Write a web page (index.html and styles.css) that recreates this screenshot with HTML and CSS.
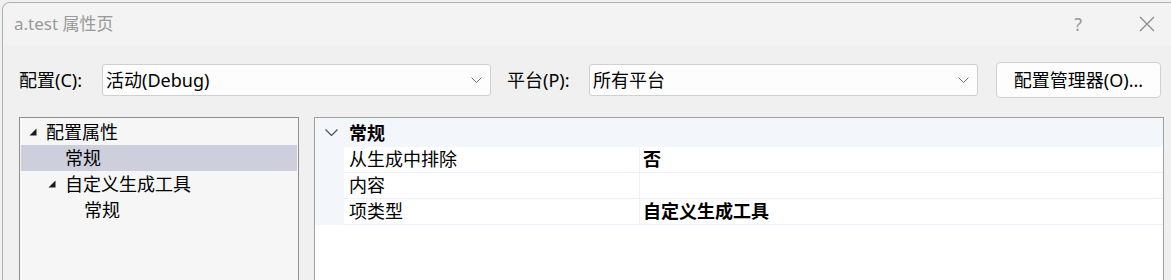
FILE: index.html
```html
<!DOCTYPE html>
<html lang="zh-CN">
<head>
  <meta charset="UTF-8">
  <meta name="viewport" content="width=device-width, initial-scale=1">
  <title>a.test 属性页</title>
  <link rel="stylesheet" href="styles.css">
</head>
<body>
  <div class="window">
    <!-- Barra de título -->
    <div class="titlebar">
      <span class="title">a.test 属性页</span>
      <span class="help">?</span>
      <span class="close">
        <svg width="16" height="16" viewBox="0 0 16 16"><path d="M1 1 L15 15 M15 1 L1 15" stroke="#8a8a8a" stroke-width="1.3" fill="none"/></svg>
      </span>
    </div>

    <div class="content">
      <!-- Configuração / plataforma -->
      <div class="config-row">
        <label class="field-label">配置(C):</label>
        <div class="combo">
          <span>活动(Debug)</span>
          <svg class="chevron" width="11" height="6" viewBox="0 0 11 6"><path d="M0.5 0.5 L5.5 5.5 L10.5 0.5" stroke="#707070" stroke-width="1" fill="none"/></svg>
        </div>
        <label class="field-label platform">平台(P):</label>
        <div class="combo">
          <span>所有平台</span>
          <svg class="chevron" width="11" height="6" viewBox="0 0 11 6"><path d="M0.5 0.5 L5.5 5.5 L10.5 0.5" stroke="#707070" stroke-width="1" fill="none"/></svg>
        </div>
        <button class="btn-manager">配置管理器(O)...</button>
      </div>

      <div class="panels">
        <!-- Árvore -->
        <div class="tree">
          <div class="tree-row level-0">
            <span class="expander"><svg width="8" height="8" viewBox="0 0 8 8"><polygon points="7.5,0.5 7.5,7.5 0.5,7.5" fill="#1a1a1a"/></svg></span>
            <span>配置属性</span>
          </div>
          <div class="tree-row level-1 selected">
            <span class="expander"></span>
            <span>常规</span>
          </div>
          <div class="tree-row level-1">
            <span class="expander"><svg width="8" height="8" viewBox="0 0 8 8"><polygon points="7.5,0.5 7.5,7.5 0.5,7.5" fill="#1a1a1a"/></svg></span>
            <span>自定义生成工具</span>
          </div>
          <div class="tree-row level-2">
            <span class="expander"></span>
            <span>常规</span>
          </div>
        </div>

        <!-- Grade de propriedades -->
        <div class="grid">
          <div class="group-header">
            <span class="group-toggle"><svg width="13" height="7" viewBox="0 0 13 7"><path d="M0.5 0.5 L6.5 6.5 L12.5 0.5" stroke="#505050" stroke-width="1.2" fill="none"/></svg></span>
            <span class="group-name">常规</span>
          </div>
          <div class="prop-row">
            <div class="prop-name">从生成中排除</div>
            <div class="prop-value">否</div>
          </div>
          <div class="prop-row">
            <div class="prop-name">内容</div>
            <div class="prop-value"></div>
          </div>
          <div class="prop-row">
            <div class="prop-name">项类型</div>
            <div class="prop-value">自定义生成工具</div>
          </div>
        </div>
      </div>
    </div>
  </div>
</body>
</html>
```

FILE: styles.css
```css
body {
  margin: 0;
  background-color: #f0f0f0;
  font-family: "Noto Sans", "Noto Sans CJK SC", sans-serif;
  font-size: 18px;
  color: #000;
  overflow: hidden;
}

.window {
  box-sizing: border-box;
  margin: 2px 0 0 2px;
  width: 1169px;
  height: 278px;
  border-top: 1px solid #b0b0b0;
  border-left: 1px solid #b0b0b0;
  border-top-left-radius: 8px;
  background-color: #f0f0f0;
  overflow: hidden;
}

.titlebar {
  height: 42px;
  background-color: #f3f3f3;
  display: flex;
  align-items: center;
  padding-left: 11px;
}

.title {
  color: #9a9a9a;
  font-size: 17px;
  line-height: 20px;
}

.help {
  margin-left: auto;
  color: #9a9a9a;
  font-size: 18px;
  line-height: 20px;
  margin-right: 57px;
}

.close {
  display: flex;
  margin-right: 16px;
}

.content {
  padding: 17px 0 0 16px;
}

.config-row {
  display: flex;
  align-items: center;
  height: 36px;
}

.field-label {
  width: 83px;
  line-height: 24px;
}

.field-label.platform {
  margin-left: 16px;
  width: 82px;
}

.combo {
  box-sizing: border-box;
  width: 389px;
  height: 32px;
  background-color: #fdfdfd;
  border: 1px solid #d0d0d0;
  border-radius: 3px;
  display: flex;
  align-items: center;
  padding: 0 8px 0 3px;
  line-height: 24px;
}

.combo .chevron {
  margin-left: auto;
}

.btn-manager {
  box-sizing: border-box;
  margin-left: 18px;
  width: 165px;
  height: 36px;
  background-color: #fdfdfd;
  border: 1px solid #d0d0d0;
  border-radius: 4px;
  font-family: inherit;
  font-size: 18px;
  color: #000;
  padding: 0;
  line-height: 24px;
}

.panels {
  display: flex;
  margin-top: 19px;
  gap: 15px;
}

.tree {
  box-sizing: border-box;
  width: 280px;
  height: 170px;
  border: 1px solid #8e8e8e;
  background-color: #f6f6f6;
  padding: 1px 1px 0 1px;
}

.tree-row {
  display: flex;
  align-items: center;
  height: 26px;
  line-height: 26px;
}

.tree-row.level-0 { padding-left: 8px; }
.tree-row.level-1 { padding-left: 27px; }
.tree-row.level-2 { padding-left: 46px; }

.tree-row.selected {
  background-color: #cdcfdc;
}

.expander {
  width: 17px;
  display: flex;
  align-items: center;
}

.grid {
  box-sizing: border-box;
  width: 850px;
  height: 170px;
  border: 1px solid #a0a0a0;
  background-color: #fff;
}

.group-header {
  height: 29px;
  display: flex;
  align-items: center;
  background-color: #f3f6fb;
}

.group-toggle {
  display: flex;
  width: 24px;
  padding-left: 10px;
}

.group-name {
  font-weight: bold;
  line-height: 26px;
}

.prop-row {
  display: flex;
  height: 26px;
  line-height: 25px;
  border-left: 29px solid #f3f6fb;
}

.prop-name {
  box-sizing: border-box;
  width: 296px;
  padding-left: 5px;
  border-right: 1px solid #eef1f7;
  border-bottom: 1px solid #eef1f7;
}

.prop-value {
  flex: 1;
  padding-left: 3px;
  font-weight: bold;
  border-bottom: 1px solid #eef1f7;
}
```
